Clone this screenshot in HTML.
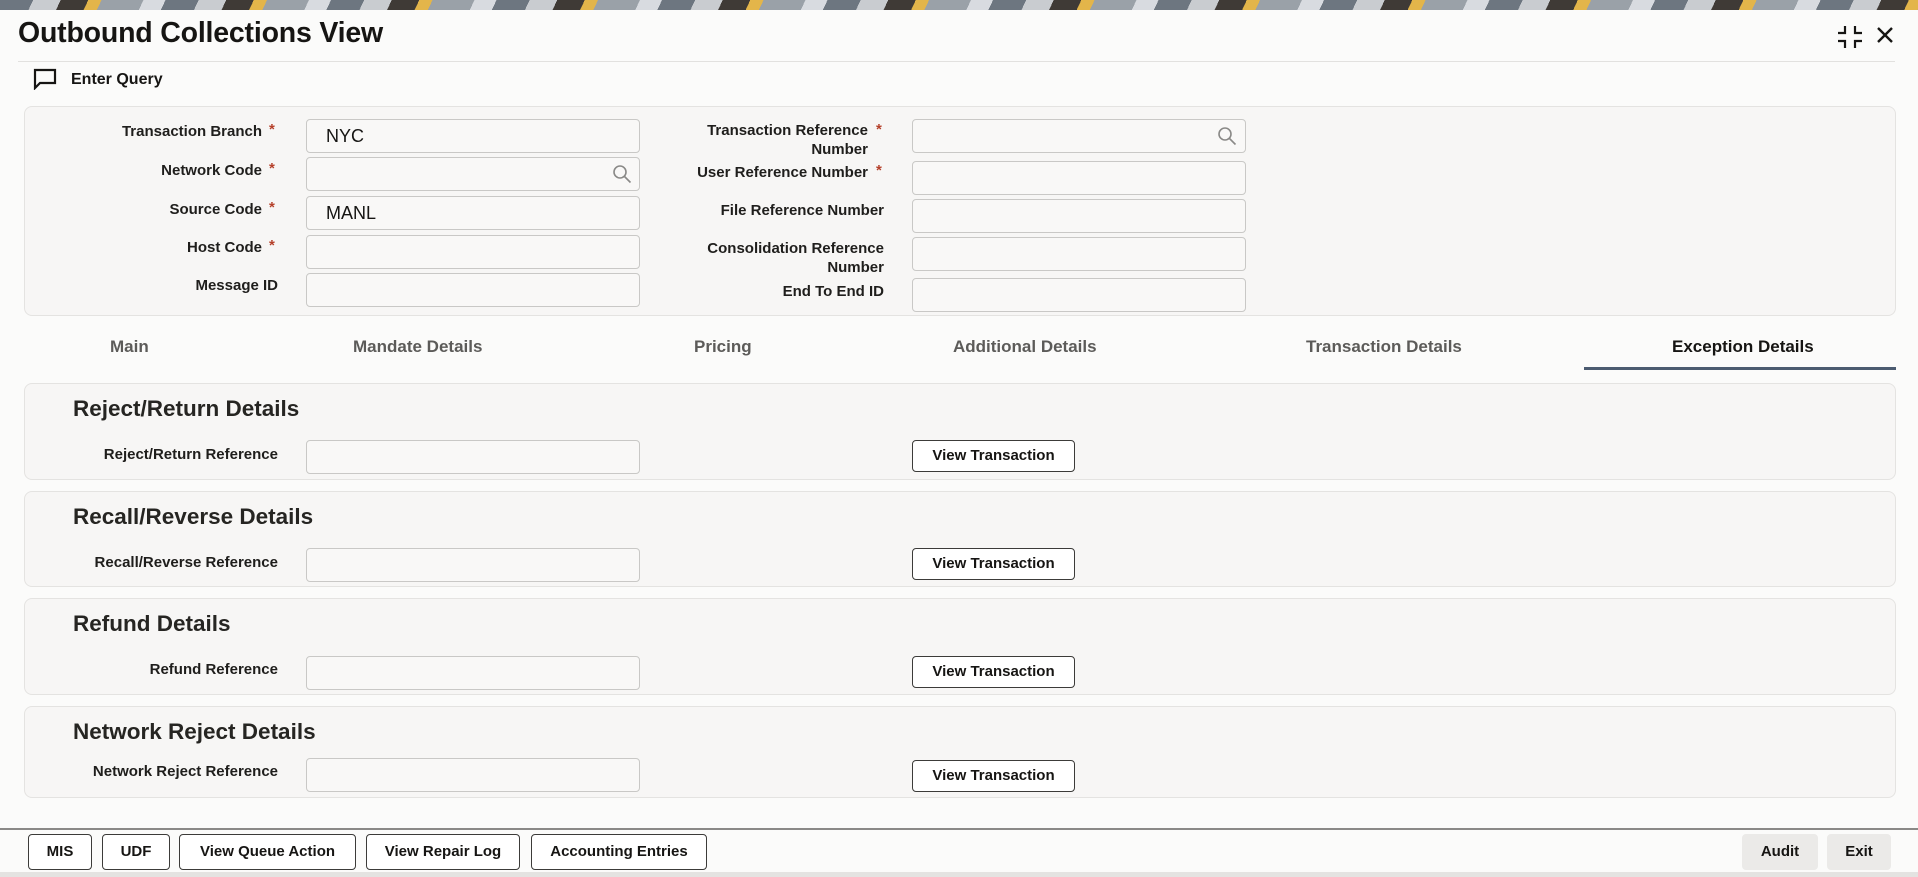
<!DOCTYPE html>
<html><head><meta charset="utf-8"><style>
*{box-sizing:border-box;margin:0;padding:0}
body{width:1918px;height:877px;overflow:hidden;background:#fbfbfa;font-family:"Liberation Sans",sans-serif;color:#161513;position:relative}
.a{position:absolute}
.banner{left:0;top:0;width:1918px;height:10px;background:repeating-linear-gradient(115deg,#6d7680 0 30px,#c9ccd0 30px 55px,#3f3a36 55px 80px,#e3b54a 80px 92px,#9aa1a8 92px 130px,#d8dbe0 130px 150px)}
.title{left:18px;top:17px;font-size:28.5px;font-weight:bold;letter-spacing:-0.2px}
.hl{left:18px;top:61px;width:1877px;height:1px;background:#e2e1df}
.panel{background:#f7f6f5;border:1px solid #e4e3e1;border-radius:8px}
.lbl{font-size:15px;font-weight:bold;color:#1f1e1c;text-align:right;line-height:19px}
.star{color:#b5402a;font-weight:bold;font-size:15px}
.inp{background:#f9f8f7;border:1px solid #c9c8c6;border-radius:4px;height:34px;font-size:18px;padding:6px 19px;color:#161513}
.tab{top:337px;font-size:17px;font-weight:bold;color:#5c5b59}
.sec{left:24px;width:1872px}
.sech{font-size:22.5px;font-weight:bold;color:#262522}
.btn{background:#fff;border:1px solid #3c3b39;border-radius:4px;font-size:15px;font-weight:bold;text-align:center;color:#161513}
.fb{top:834px;height:36px;line-height:34px}
</style></head><body>
<div class="a banner"></div>
<div class="a title">Outbound Collections View</div>
<svg class="a" style="left:1837px;top:25px" width="26" height="24" viewBox="0 0 26 24" fill="none" stroke="#161513" stroke-width="2.2"><path d="M8 1v7H1M18 1v7h7M8 23v-7H1M18 23v-7h7"/></svg>
<svg class="a" style="left:1876px;top:26px" width="18" height="18" viewBox="0 0 18 18" stroke="#161513" stroke-width="2.4"><path d="M2 2l14 14M16 2L2 16"/></svg>
<div class="a hl"></div>
<svg class="a" style="left:33px;top:68px" width="24" height="22" viewBox="0 0 24 22" fill="none" stroke="#161513" stroke-width="2.2"><path d="M2 2h20v13H7l-5 5z"/></svg>
<div class="a" style="left:71px;top:71px;font-size:16px;font-weight:bold">Enter Query</div>

<div class="a panel" style="left:24px;top:106px;width:1872px;height:210px"></div>
<div class="a lbl" style="left:40px;width:222px;top:122px">Transaction Branch</div><div class="a star" style="left:269px;top:121px">*</div>
<div class="a lbl" style="left:40px;width:222px;top:161px">Network Code</div><div class="a star" style="left:269px;top:160px">*</div>
<div class="a lbl" style="left:40px;width:222px;top:200px">Source Code</div><div class="a star" style="left:269px;top:199px">*</div>
<div class="a lbl" style="left:40px;width:222px;top:238px">Host Code</div><div class="a star" style="left:269px;top:237px">*</div>
<div class="a lbl" style="left:40px;width:238px;top:276px">Message ID</div>
<div class="a inp" style="left:306px;top:119px;width:334px">NYC</div>
<div class="a inp" style="left:306px;top:157px;width:334px"></div>
<svg class="a" style="left:612px;top:164px" width="20" height="20" viewBox="0 0 20 20" fill="none" stroke="#8a8987" stroke-width="1.6"><circle cx="8" cy="8" r="6"/><path d="M12.5 12.5l6 6"/></svg>
<div class="a inp" style="left:306px;top:196px;width:334px">MANL</div>
<div class="a inp" style="left:306px;top:235px;width:334px"></div>
<div class="a inp" style="left:306px;top:273px;width:334px"></div>

<div class="a lbl" style="left:620px;width:248px;top:121px">Transaction Reference<br>Number</div><div class="a star" style="left:876px;top:121px">*</div>
<div class="a lbl" style="left:620px;width:248px;top:163px">User Reference Number</div><div class="a star" style="left:876px;top:162px">*</div>
<div class="a lbl" style="left:620px;width:264px;top:201px">File Reference Number</div>
<div class="a lbl" style="left:620px;width:264px;top:239px">Consolidation Reference<br>Number</div>
<div class="a lbl" style="left:620px;width:264px;top:282px">End To End ID</div>
<div class="a inp" style="left:912px;top:119px;width:334px"></div>
<svg class="a" style="left:1217px;top:126px" width="20" height="20" viewBox="0 0 20 20" fill="none" stroke="#8a8987" stroke-width="1.6"><circle cx="8" cy="8" r="6"/><path d="M12.5 12.5l6 6"/></svg>
<div class="a inp" style="left:912px;top:161px;width:334px"></div>
<div class="a inp" style="left:912px;top:199px;width:334px"></div>
<div class="a inp" style="left:912px;top:237px;width:334px"></div>
<div class="a inp" style="left:912px;top:278px;width:334px"></div>

<div class="a tab" style="left:110px">Main</div>
<div class="a tab" style="left:353px">Mandate Details</div>
<div class="a tab" style="left:694px">Pricing</div>
<div class="a tab" style="left:953px">Additional Details</div>
<div class="a tab" style="left:1306px">Transaction Details</div>
<div class="a tab" style="left:1672px;color:#161513">Exception Details</div>
<div class="a" style="left:1584px;top:367px;width:312px;height:3px;background:#4b5b70"></div>

<div class="a panel sec" style="top:383px;height:97px"></div>
<div class="a sech" style="left:73px;top:396px">Reject/Return Details</div>
<div class="a lbl" style="left:40px;width:238px;top:445px">Reject/Return Reference</div>
<div class="a inp" style="left:306px;top:440px;width:334px"></div>
<div class="a btn" style="left:912px;top:440px;width:163px;height:32px;line-height:30px">View Transaction</div>

<div class="a panel sec" style="top:491px;height:96px"></div>
<div class="a sech" style="left:73px;top:504px">Recall/Reverse Details</div>
<div class="a lbl" style="left:40px;width:238px;top:553px">Recall/Reverse Reference</div>
<div class="a inp" style="left:306px;top:548px;width:334px"></div>
<div class="a btn" style="left:912px;top:548px;width:163px;height:32px;line-height:30px">View Transaction</div>

<div class="a panel sec" style="top:598px;height:97px"></div>
<div class="a sech" style="left:73px;top:611px">Refund Details</div>
<div class="a lbl" style="left:40px;width:238px;top:660px">Refund Reference</div>
<div class="a inp" style="left:306px;top:656px;width:334px"></div>
<div class="a btn" style="left:912px;top:656px;width:163px;height:32px;line-height:30px">View Transaction</div>

<div class="a panel sec" style="top:706px;height:92px"></div>
<div class="a sech" style="left:73px;top:719px">Network Reject Details</div>
<div class="a lbl" style="left:40px;width:238px;top:762px">Network Reject Reference</div>
<div class="a inp" style="left:306px;top:758px;width:334px"></div>
<div class="a btn" style="left:912px;top:760px;width:163px;height:32px;line-height:30px">View Transaction</div>

<div class="a" style="left:0;top:828px;width:1918px;height:2px;background:#8a8987"></div>
<div class="a btn fb" style="left:28px;width:64px">MIS</div>
<div class="a btn fb" style="left:102px;width:68px">UDF</div>
<div class="a btn fb" style="left:179px;width:177px">View Queue Action</div>
<div class="a btn fb" style="left:366px;width:154px">View Repair Log</div>
<div class="a btn fb" style="left:531px;width:176px">Accounting Entries</div>
<div class="a btn fb" style="left:1742px;width:76px;background:#ebeae8;border-color:#ebeae8">Audit</div>
<div class="a btn fb" style="left:1827px;width:64px;background:#ebeae8;border-color:#ebeae8">Exit</div>
<div class="a" style="left:0;top:872px;width:1918px;height:5px;background:#e4e3e1"></div>
</body></html>
